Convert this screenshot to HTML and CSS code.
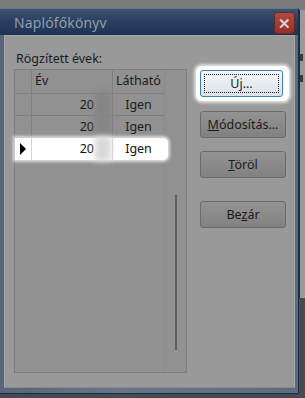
FILE: index.html
```html
<!DOCTYPE html>
<html lang="hu">
<head>
    <meta charset="UTF-8">
    <title>Naplófőkönyv</title>
    <link rel="stylesheet" href="styles.css">
</head>
<body>
    <div class="screen">
        <!-- Dialog window -->
        <div class="window">
            <div class="titlebar">
                <span class="title">Naplófőkönyv</span>
                <span class="close">&#x2715;</span>
            </div>
            <div class="client">
                <div class="list-col">
                    <div class="label">Rögzített évek:</div>
                    <div class="grid">
                        <div class="grid-body">
                            <div class="row head">
                                <div class="cell rh"></div>
                                <div class="cell year">Év</div>
                                <div class="cell vis">Látható</div>
                            </div>
                            <div class="row">
                                <div class="cell rh"></div>
                                <div class="cell year num">20<span class="blur"></span></div>
                                <div class="cell vis">Igen</div>
                            </div>
                            <div class="row">
                                <div class="cell rh"></div>
                                <div class="cell year num">20<span class="blur"></span></div>
                                <div class="cell vis">Igen</div>
                            </div>
                            <div class="row selected">
                                <div class="cell rh"><span class="arrow"></span></div>
                                <div class="cell year num">20<span class="blur"></span></div>
                                <div class="cell vis">Igen</div>
                            </div>
                        </div>
                        <div class="scrollbar"><span class="thumb"></span></div>
                    </div>
                </div>
                <div class="buttons">
                    <div class="spot">
                        <button class="btn focus"><span class="dots">Ú<u>j</u>...</span></button>
                    </div>
                    <button class="btn"><u>M</u>ódosítás...</button>
                    <button class="btn"><u>T</u>öröl</button>
                    <button class="btn last">Be<u>z</u>ár</button>
                </div>
            </div>
        </div>
        <!-- edge of the window behind -->
        <div class="behind">
            <span class="mark"></span>
            <span class="mark"></span>
        </div>
    </div>
</body>
</html>
```

FILE: styles.css
```css
* {
    box-sizing: border-box;
    margin: 0;
    padding: 0;
}

body {
    background: linear-gradient(#7b7b7b 0 298px, #474a50 298px);
    font-family: "Noto Sans", "Open Sans", sans-serif;
    font-size: 12px;
    color: #1b1b1b;
    width: 305px;
    height: 398px;
    overflow: hidden;
}

.screen {
    display: flex;
    height: 398px;
}

/* Window frame */
.window {
    width: 299px;
    height: 386px;
    margin-top: 8px;
    border: 1px solid #1c2c47;
    border-left: none;
    border-top-color: #6b7789;
    background: linear-gradient(to right, #56657a, #6a7686 40%, #5d6b7f);
    padding: 0 3px 5px 4px;
    display: flex;
    flex-direction: column;
    flex-shrink: 0;
}

.titlebar {
    height: 26px;
    margin: 0 -3px 0 -4px;
    padding: 0 3px 0 14px;
    background: linear-gradient(#3d5170, #2a3f60 50%, #1f3355);
    display: flex;
    align-items: center;
    justify-content: space-between;
}

.title {
    color: #99a3ae;
    font-family: "Open Sans", sans-serif;
    font-size: 14px;
    letter-spacing: 0.2px;
}

.close {
    width: 21px;
    height: 22px;
    margin-top: 2px;
    border: 1px solid #5e2a2a;
    border-radius: 3px;
    background: linear-gradient(#b24a42, #9a2d27);
    color: #dccfcf;
    font-size: 15px;
    font-weight: bold;
    display: flex;
    align-items: center;
    justify-content: center;
}

/* Client area */
.client {
    flex: 1;
    background-color: #999999;
    border: 1px solid #a6a6a6;
    border-bottom-color: #8a8a8a;
    padding: 15px 0 14px 9px;
    display: flex;
    gap: 13px;
}

.list-col {
    display: flex;
    flex-direction: column;
    width: 173px;
}

.label {
    height: 18px;
    padding-left: 2px;
    line-height: 16px;
    font-size: 12.5px;
}

.grid {
    flex: 1;
    border: 1px solid #7c7c7c;
    background-color: #919191;
    display: flex;
}

.grid-body {
    width: 149px;
}

.row {
    display: flex;
    height: 22px;
    border-bottom: 1px solid #7e7e7e;
}

.row.head {
    height: 24px;
}

.cell {
    border-right: 1px solid #7e7e7e;
    line-height: 21px;
    font-size: 12.5px;
    position: relative;
}

.rh {
    width: 17px;
}

.year {
    width: 81px;
    padding-left: 3px;
}

.year.num {
    padding-left: 0;
    padding-right: 18px;
    text-align: right;
}

.vis {
    width: 51px;
    text-align: center;
    border-right: none;
}

.head .vis {
    text-align: left;
    padding-left: 3px;
}

.blur {
    position: absolute;
    right: 1px;
    top: -2px;
    width: 16px;
    height: 25px;
    background-color: #858585;
    filter: blur(3px);
}

/* Highlighted row */
.row.selected {
    position: relative;
    z-index: 1;
    background-color: #ffffff;
    border-bottom: none;
    border-radius: 0 5px 5px 0;
    margin-right: -4px;
    box-shadow: 0 0 3px 2px rgba(255, 255, 255, 0.7);
}

.selected .cell {
    border-right-color: #d4d4d4;
    color: #111;
}

.selected .blur {
    background-color: #d8d8d8;
}

.arrow {
    position: absolute;
    left: 5px;
    top: 5px;
    border-left: 6px solid #000;
    border-top: 6px solid transparent;
    border-bottom: 6px solid transparent;
}

.scrollbar {
    flex: 1;
    border-left: 1px solid #8a8a8a;
    display: flex;
    justify-content: center;
    padding-top: 125px;
    padding-bottom: 22px;
}

.thumb {
    width: 2px;
    background-color: #5e5e5e;
}

/* Buttons */
.buttons {
    display: flex;
    flex-direction: column;
    width: 86px;
    padding-top: 19px;
}

.btn {
    height: 27px;
    width: 86px;
    border: 1px solid #6a6a6a;
    border-radius: 3px;
    background: linear-gradient(#939393, #8a8a8a 50%, #818181);
    font-family: "Noto Sans", "Open Sans", sans-serif;
    font-size: 12.5px;
    color: #1b1b1b;
    margin-top: 14px;
}

.btn + .btn {
    margin-top: 13px;
}

.btn.last {
    margin-top: 23px;
}

.spot {
    margin: -4px -3px -4px -4px;
    padding: 4px 3px 4px 4px;
    background-color: #ffffff;
    border-radius: 6px;
    box-shadow: 0 0 3px 2px rgba(255, 255, 255, 0.7);
}

.spot .btn {
    margin-top: 0;
    width: 83px;
    border-color: #3c7fb1;
    background: linear-gradient(#f4f6f9, #e8ecf2 50%, #d9e0ea);
    padding: 3px;
}

.dots {
    display: block;
    height: 19px;
    line-height: 17px;
    border: 1px dotted #222;
}

/* Window behind */
.behind {
    flex: 1;
    margin-top: 10px;
    height: 288px;
    background-color: #9a9a9a;
    border-left: 1px solid #1c2c47;
    padding-top: 44px;
    display: flex;
    flex-direction: column;
    gap: 14px;
}

.mark {
    width: 3px;
    height: 7px;
    background-color: #3a3a3a;
}
```
